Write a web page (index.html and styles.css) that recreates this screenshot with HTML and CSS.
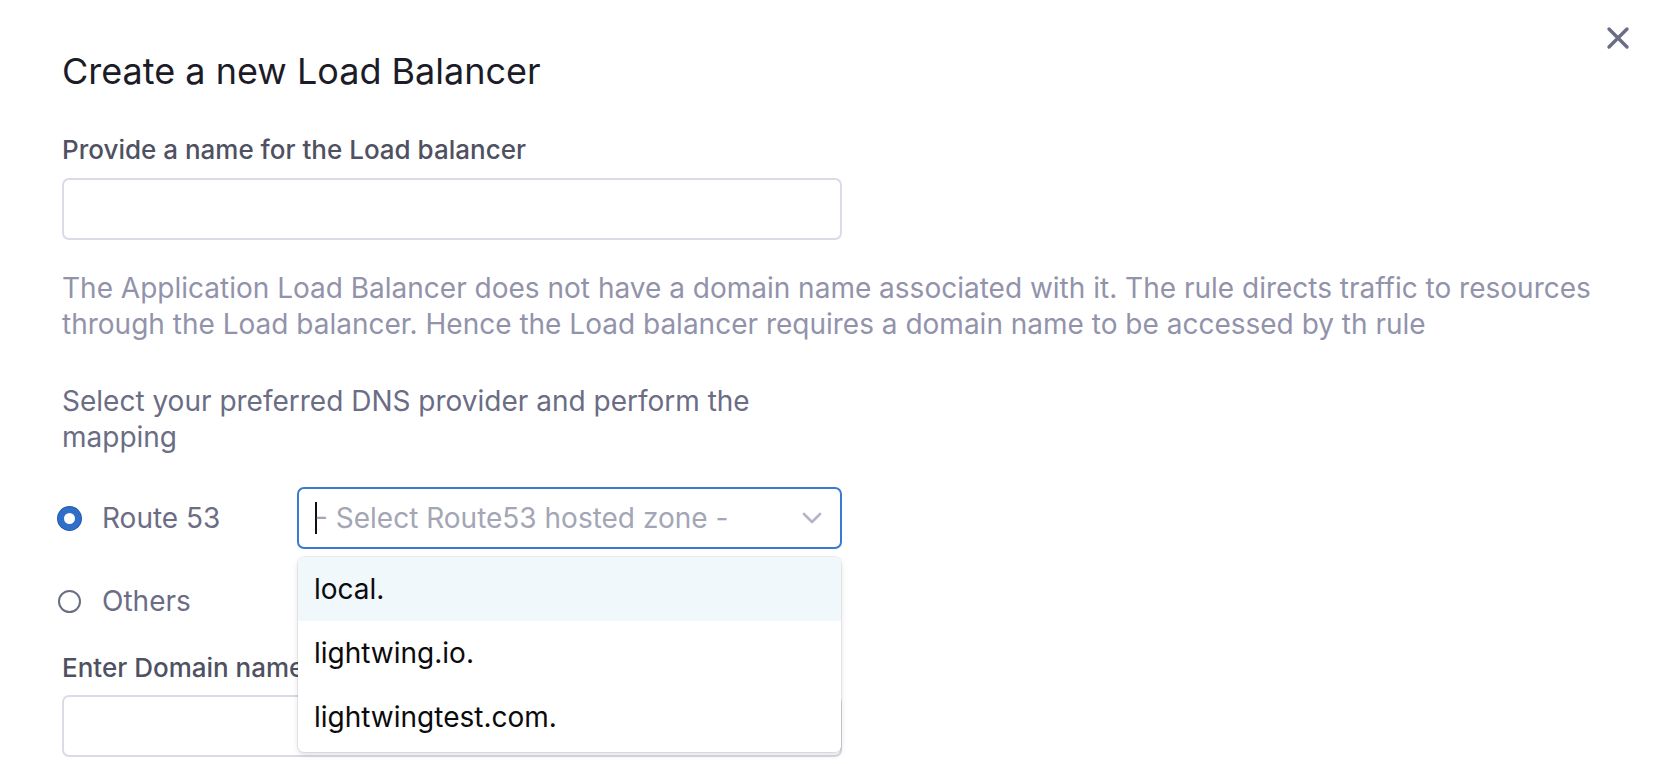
FILE: index.html
```html
<!DOCTYPE html>
<html lang="en">

<head>
    <meta charset="UTF-8">
    <meta name="viewport" content="width=device-width, initial-scale=1.0">
    <title>Create a new Load Balancer</title>
    <link rel="stylesheet" href="styles.css">
</head>

<body>
    <div class="dialog">
        <button class="close" aria-label="Close">
            <svg width="24" height="24" viewBox="0 0 24 24">
                <path d="M3 3 L21 21 M21 3 L3 21" stroke="#6b6d85" stroke-width="3.4" stroke-linecap="round" fill="none" />
            </svg>
        </button>

        <h2 class="title">Create a new Load Balancer</h2>

        <div class="field">
            <label class="field-label">Provide a name for the Load balancer</label>
            <input type="text" class="text-input">
        </div>

        <p class="note">The Application Load Balancer does not have a domain name associated with it. The rule directs traffic to resources through the Load balancer. Hence the Load balancer requires a domain name to be accessed by th rule</p>

        <p class="dns-text">Select your preferred DNS provider and perform the mapping</p>

        <div class="dns-options">
            <div class="radio-row">
                <label class="radio"><span class="radio-dot checked"></span>Route 53</label>
                <div class="select-wrap">
                    <div class="select">
                        <span class="caret"></span><span class="placeholder">- Select Route53 hosted zone -</span>
                        <svg class="chevron" width="20" height="12" viewBox="0 0 20 12">
                            <path d="M2 2 L10 10 L18 2" stroke="#b4b5c6" stroke-width="2.6" fill="none" stroke-linecap="round" stroke-linejoin="round" />
                        </svg>
                    </div>
                    <ul class="menu">
                        <li class="active">local.</li>
                        <li>lightwing.io.</li>
                        <li>lightwingtest.com.</li>
                    </ul>
                </div>
            </div>
            <div class="radio-row">
                <label class="radio"><span class="radio-dot"></span>Others</label>
            </div>
        </div>

        <div class="field domain-field">
            <label class="field-label">Enter Domain name</label>
            <input type="text" class="text-input">
        </div>
    </div>
</body>

</html>
```

FILE: styles.css
```css
body {
    margin: 0;
    padding: 0;
    background: #fff;
    font-family: 'Inter', 'Noto Sans', sans-serif;
    overflow: hidden;
}

.dialog {
    position: relative;
    padding: 51px 0 0 62px;
    height: 764px;
    box-sizing: border-box;
}

/* Close button */
.close {
    position: absolute;
    top: 26px;
    right: 38px;
    border: none;
    background: none;
    padding: 0;
    cursor: pointer;
}

.title {
    margin: 0;
    font-size: 36px;
    line-height: 40px;
    font-weight: 400;
    color: #1c1c28;
}

/* Form fields */
.field {
    margin-top: 44px;
    width: 780px;
    display: flex;
    flex-direction: column;
}

.field-label {
    font-size: 26px;
    line-height: 30px;
    font-weight: 500;
    color: #4f5162;
    margin-bottom: 13px;
}

.text-input {
    height: 62px;
    box-sizing: border-box;
    border: 2px solid #dadbe6;
    border-radius: 7px;
    background: #fff;
    font-family: inherit;
    font-size: 26px;
}

.note {
    margin: 30px 0 0;
    font-size: 28px;
    line-height: 36px;
    color: #9293ab;
    max-width: 1560px;
}

.dns-text {
    margin: 41px 0 0;
    width: 780px;
    font-size: 28px;
    line-height: 36px;
    color: #6b6d85;
}

/* Radio group */
.dns-options {
    margin-top: 32px;
    width: 780px;
    display: flex;
    flex-direction: column;
    gap: 21px;
}

.radio-row {
    display: flex;
    align-items: center;
    height: 62px;
}

.radio {
    width: 235px;
    display: flex;
    align-items: center;
    gap: 21px;
    margin-left: -4px;
    font-size: 28px;
    color: #6b6d85;
}

.radio-dot {
    width: 23px;
    height: 23px;
    box-sizing: border-box;
    border-radius: 50%;
    border: 2px solid #6b6d85;
    background: #fff;
}

.radio-dot.checked {
    border: 6px solid #2f6fc9;
    box-shadow: 0 0 0 1px #2459a8;
}

/* Select */
.select-wrap {
    position: relative;
    flex: 1;
    margin-left: 4px;
}

.select {
    height: 62px;
    box-sizing: border-box;
    border: 2px solid #3b7ad3;
    border-radius: 7px;
    display: flex;
    align-items: center;
    padding-left: 16px;
    font-size: 28px;
}

.caret {
    display: inline-block;
    width: 2px;
    height: 32px;
    background: #111;
    margin-right: -2px;
}

.placeholder {
    color: #a3a6b4;
}

.chevron {
    margin-left: auto;
    margin-right: 18px;
}

.menu {
    position: absolute;
    top: 70px;
    left: 1px;
    right: 1px;
    margin: 0;
    padding: 0 0 3px;
    list-style: none;
    background: #fff;
    border-radius: 6px;
    box-shadow: 0 0 0 1px rgba(0, 0, 0, 0.06), 0 3px 6px rgba(0, 0, 0, 0.12);
    overflow: hidden;
    z-index: 2;
}

.menu li {
    height: 64px;
    line-height: 64px;
    padding-left: 16px;
    font-size: 28px;
    color: #0b0b0d;
}

.menu li.active {
    background: #f0f8fc;
}

.domain-field {
    margin-top: 21px;
}

.domain-field .field-label {
    margin-bottom: 12px;
}
```
